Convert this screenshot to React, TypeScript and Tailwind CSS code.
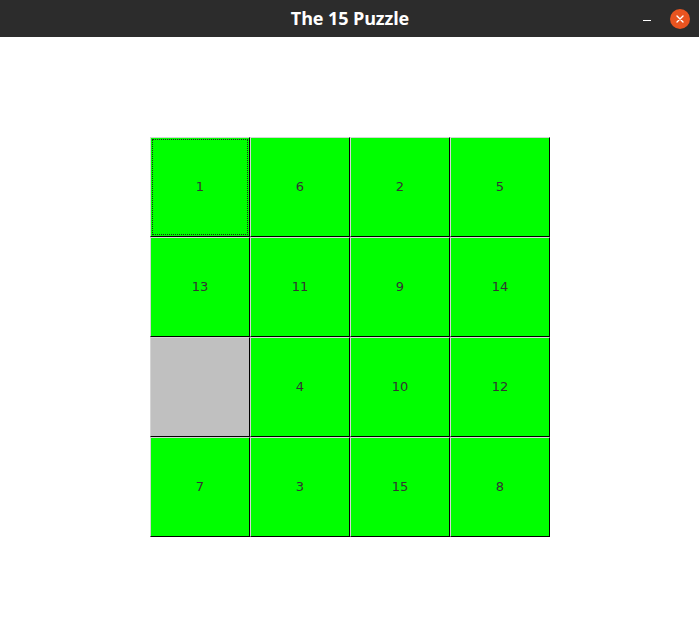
import React from "react";

const tiles: (number | null)[] = [1, 6, 2, 5, 13, 11, 9, 14, null, 4, 10, 12, 7, 3, 15, 8];

export default function App() {
  return (
    <div className="w-[699px] h-[637px] bg-white flex flex-col">
      <div className="h-[37px] bg-[#2c2c2c] flex items-center relative shrink-0">
        <div className="flex-1 text-center text-white font-bold text-[18px] font-['Open_Sans',sans-serif] tracking-[-0.1px] pl-[1px]">
          The 15 Puzzle
        </div>
        <div className="absolute right-[9px] top-0 h-[37px] flex items-center gap-[19px]">
          <div className="w-[8px] h-[1.5px] bg-white mt-[4px]" />
          <div className="w-[20px] h-[20px] rounded-full bg-[#e95420] flex items-center justify-center">
            <svg width="8" height="8" viewBox="0 0 8 8">
              <path d="M1 1 L7 7 M7 1 L1 7" stroke="white" strokeWidth="1.4" strokeLinecap="round" />
            </svg>
          </div>
        </div>
      </div>
      <div className="flex-1 pt-[100px] pl-[150px]">
        <div className="grid grid-cols-[repeat(4,100px)] grid-rows-[repeat(4,100px)] w-[400px]">
          {tiles.map((t, i) => (
            <div
              key={i}
              className={
                "flex items-center justify-center border-t border-l border-[#d4d4d4] border-b-black border-r-black border-b border-r text-[13px] text-[#333] font-['DejaVu_Sans',sans-serif] " +
                (t === null ? "bg-[#c0c0c0]" : "bg-[#00ff00]") +
                (t === 1 ? " outline-1 outline-dotted outline-[#222] outline-offset-[-3px]" : "")
              }
            >
              {t ?? ""}
            </div>
          ))}
        </div>
      </div>
    </div>
  );
}
